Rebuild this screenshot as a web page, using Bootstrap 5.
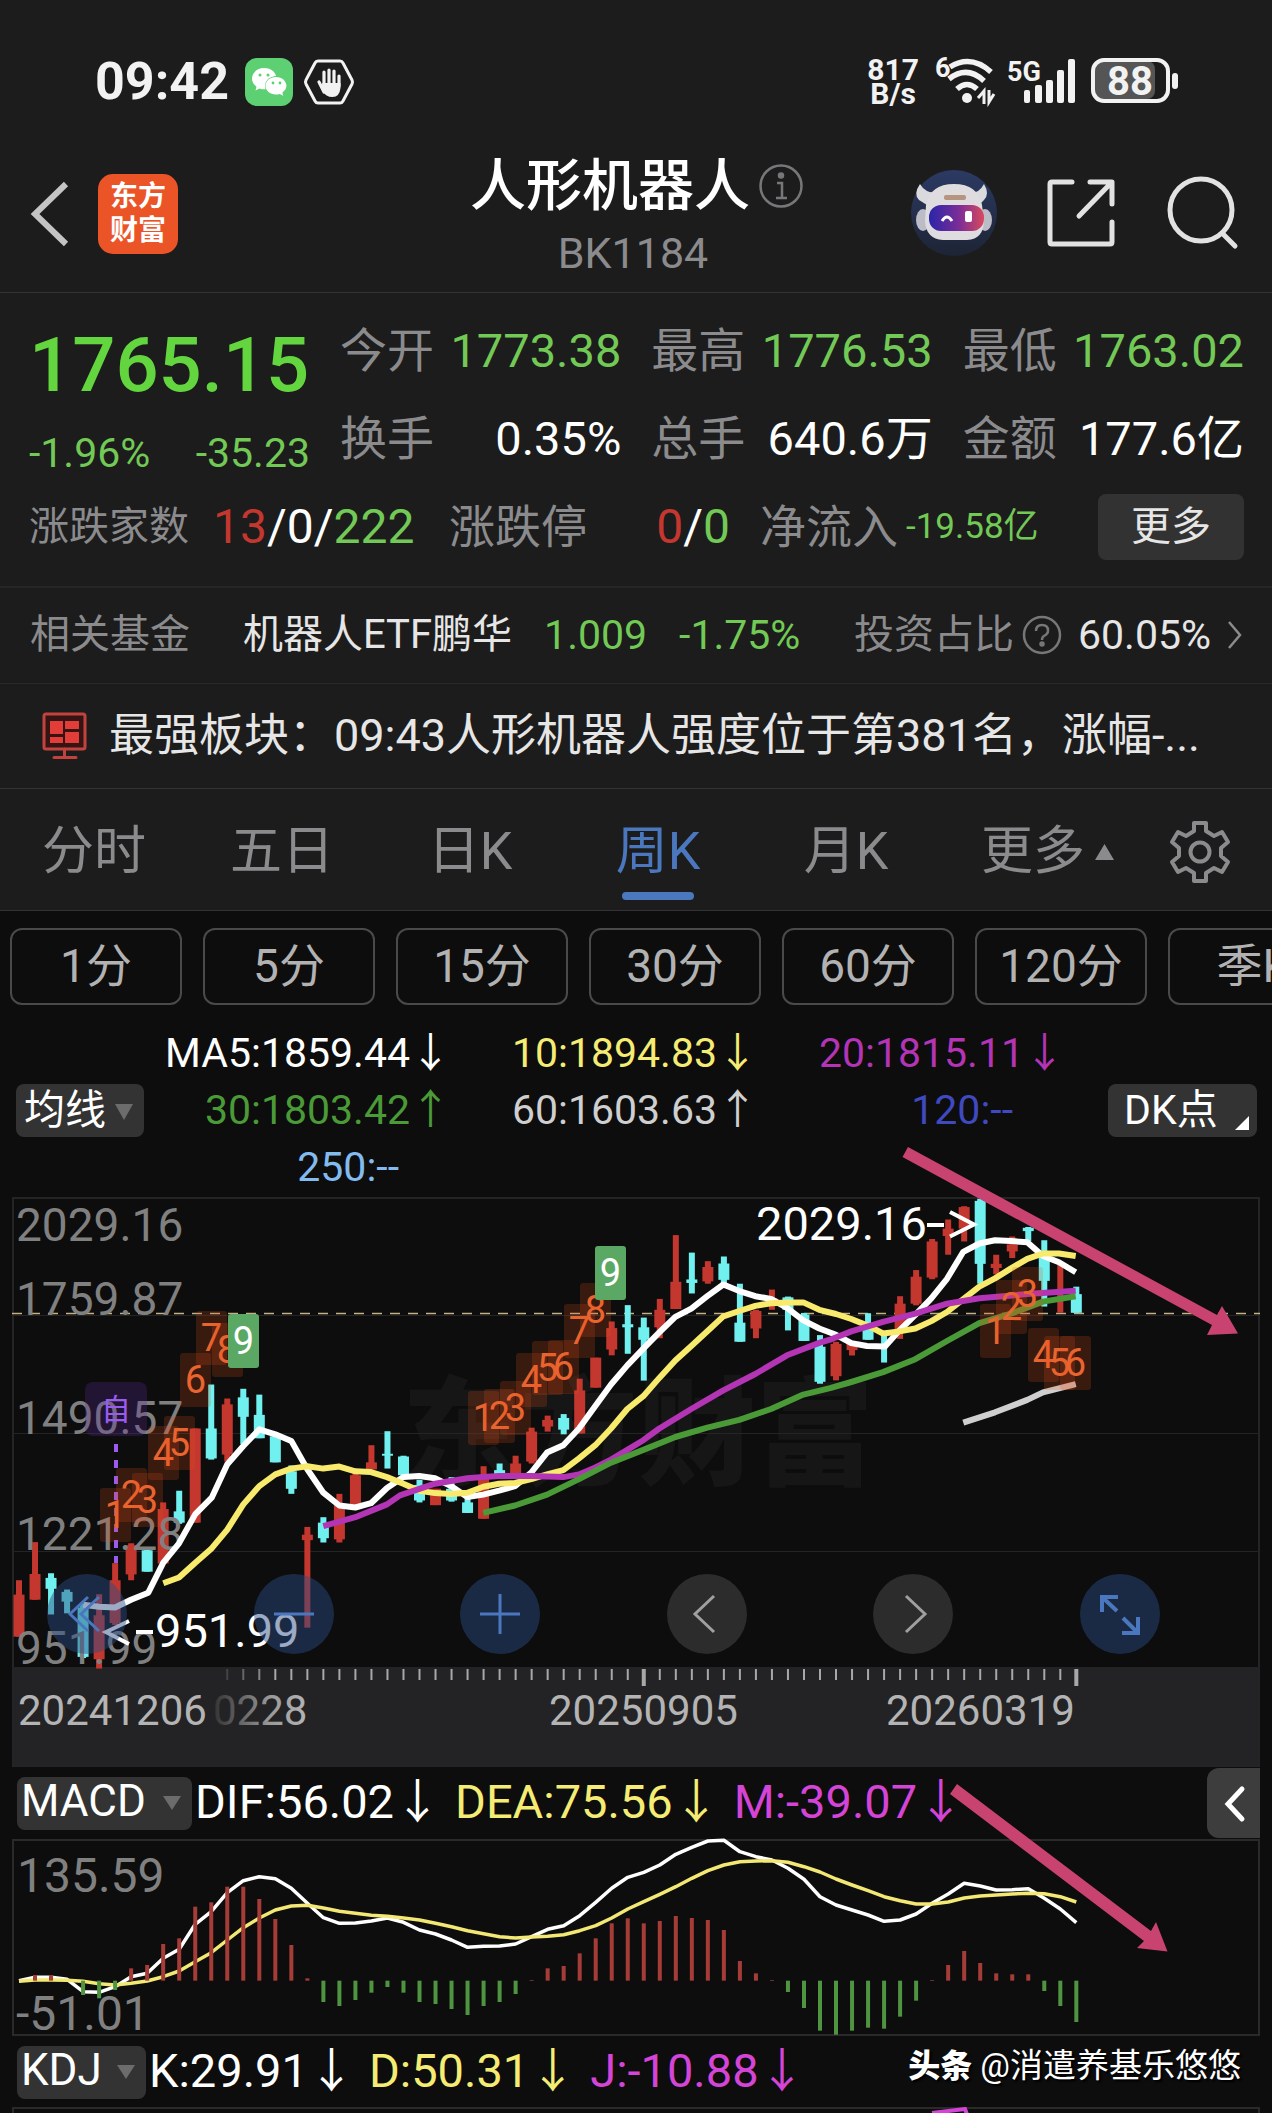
<!DOCTYPE html>
<html lang="zh-CN" data-bs-theme="dark">
<head>
<meta charset="utf-8">
<meta name="viewport" content="width=device-width, initial-scale=1">
<title>人形机器人 BK1184</title>
<link href="https://cdn.jsdelivr.net/npm/bootstrap@5.3.0/dist/css/bootstrap.min.css" rel="stylesheet">
<style>
:root{--up:#c3372f;--down:#72c955;--panel:#1c1c1c;--muted:#8b8b8d;--rule:#333335}
body{background:#0d0d0d;color:#fff;font-family:Roboto,"Noto Sans CJK SC",sans-serif;line-height:1;overflow-x:hidden}
a{text-decoration:none;color:inherit}
svg{display:block;flex-shrink:0}
.panel{background:var(--panel)}
.rule-b{border-bottom:1px solid var(--rule)}
.rule-soft{border-bottom:2px solid #262527}
.dim{color:var(--muted)}
.dn{color:var(--down)}
.up{color:var(--up)}
.plain-btn{background:none;border:0;padding:0;color:inherit}
.statusbar{padding:57px 93px 0 95px;height:106px;color:#f2f2f2}
.clock{font-size:52px;font-weight:700;line-height:50px}
.speed{font-size:30px;font-weight:700;line-height:24px}
.topbar{height:187px;padding:0 32px 0 30px}
.topbar-left{height:216px}
.topbar-right{height:214px;gap:48px}
.topbar-title{padding:49px 6px 0 0}
.logo{width:80px;height:80px;border-radius:15px;background:#ea5427;font-size:28px;font-weight:700;line-height:34px;margin-left:28px}
.heading{font-size:56px;font-weight:500;line-height:62px}
.code{font-size:43px;line-height:44px;margin-top:14px}
.quote{padding:28px 28px 0 29px;height:295px}
.quote-grid{display:grid;grid-template-columns:281px 1fr 1fr 1fr;column-gap:30px}
.price{font-size:76px;font-weight:500;line-height:88px;color:#63d63f}
.change{font-size:41px;line-height:72px}
.t48{font-size:48px;line-height:60px}
.t46{font-size:46px;line-height:60px}
.t40{font-size:40px;line-height:52px}
.t41{font-size:41px;line-height:52px}
.t34{font-size:35px;line-height:52px}
.cell{height:88px;font-size:47px;line-height:60px}
.quote-row{margin-top:-3px}
.more{background:#323232;border:0;border-radius:8px;color:#e6e6e6;font-size:40px;line-height:64px;width:146px}
.fund{height:96px;padding:0 29px 2px 30px;color:#e6e6e6}
.news{height:105px;padding:0 40px 0 42px;font-size:45px;line-height:60px;color:#e6e6e6}
.tabs{height:122px;padding-top:4px;font-size:52px;line-height:64px;color:var(--muted)}
.tabs>*{flex:188 1 0}
.tabs>.gear{flex:144 1 0}
.tabs .caret{margin:0 14px 0 10px}
.tabs .on{color:#4a77bd;position:relative}
.tabs .on::after{content:"";position:absolute;left:58px;right:58px;bottom:-16px;height:8px;border-radius:4px;background:#4a77bd}
.pills{padding:17px 0 20px 10px;gap:21px;overflow:hidden}
.pill{flex:0 0 172px;height:77px;border:2px solid #4a4a4a;border-radius:12px;background:none;color:#b2b2b2;font-size:46px;line-height:60px;padding:0 0 2px}
.chip{background:#333;border-radius:8px;position:relative;height:53px}
.chip select,.chip-btn{appearance:none;border:0;background:none;color:#fff;height:53px;width:100%;padding:0 0 2px 8px;outline:0}
.chip .ind-select{font-size:44px;line-height:48px;padding:0 0 8px 4px}
.chip svg{position:absolute;pointer-events:none}
.legend-grid{display:grid;grid-template-columns:1fr 1fr 1fr;flex:1;padding-right:43px;font-size:41px;line-height:57px;text-align:right;white-space:nowrap}
.noarrow{padding-right:52px}
.chart{position:relative}
.chart svg.plot{width:100%;height:auto;overflow:visible;position:relative}
.tools{position:absolute;left:47px;right:112px;bottom:114px;z-index:2}
.tool{width:80px;height:80px;border-radius:50%;border:0;padding:0;background:rgba(45,76,132,.47);color:#4a77bd}
.tool.g{background:#2c2c2c;color:#a0a0a0}
.ind{height:70px;padding-left:17px;white-space:nowrap;position:relative}
.vals{font-size:47px;line-height:60px;gap:14px;margin-left:3px;padding-bottom:2px}
.side{position:absolute;right:12px;top:0;width:53px;height:70px;border:0;padding:0;border-radius:12px 0 0 12px;background:#3d3d3d}
.credit{position:absolute;right:31px;top:0;line-height:58px;font-size:33px;text-shadow:2px 2px 2px #000}
.credit b{font-weight:900;font-size:32px}
.plot text{font-family:Roboto,"Noto Sans CJK SC",sans-serif}
.y{color:#f5ec74}.p{color:#d444d6}
</style>
<script src="https://cdn.jsdelivr.net/npm/bootstrap@5.3.0/dist/js/bootstrap.bundle.min.js"></script>
</head>
<body>
<div class="panel">
  <div class="statusbar d-flex align-items-start justify-content-between">
    <div class="d-flex align-items-center">
      <span class="clock">09:42</span>
      <svg class="ms-3" width="48" height="50" viewBox="0 0 48 50"><rect y="1" width="48" height="48" rx="12" fill="#5dd074"/><path d="M19 11c-7 0-12 5-12 10.500 0 3.500 1.500 6 4.500 8l-1 4 4-2c5 1.500 6 .500 6 .500-2-8 4-12.500 10.500-13C30 14 25 11 19 11z" fill="#fff"/><path d="M31 20c-6 0-10.500 4-10.500 8.800S25 37.500 31 37.500c1.500 0 2.600-.2 3.800-.6l3.400 1.800-.8-3.200c2.400-1.600 4-4 4-6.700C41.400 24 37 20 31 20z" fill="#fff"/><g fill="#5dd074"><circle cx="15" cy="18" r="1.500"/><circle cx="23" cy="18" r="1.500"/><circle cx="28" cy="26" r="1.400"/><circle cx="35" cy="26" r="1.400"/></g></svg>
      <svg class="ms-2" width="56" height="48" viewBox="0 0 56 48"><path d="M17 3h22q2 0 3 2l9 17q1 2 0 4l-9 17q-1 2-3 2H17q-2 0-3-2L5 26q-1-2 0-4l9-17q1-2 3-2z" fill="none" stroke="#f2f2f2" stroke-width="3"/><g stroke="#f2f2f2" stroke-width="3.200" stroke-linecap="round" fill="none"><path d="M23 14v14M28 12v14M33 13v14M38 18v10M18 24l5 10"/></g><path d="M21 25h18.500v5q-1 9-8 9-7 0-9.500-6z" fill="#f2f2f2"/></svg>
    </div>
    <div class="d-flex align-items-center">
      <div class="speed text-center me-3">817<br>B/s</div>
      <svg width="64" height="50" viewBox="0 0 64 50"><text x="0" y="20" font-size="27" font-weight="700" fill="#f2f2f2">6</text><g fill="none" stroke="#f2f2f2" stroke-width="5.500"><path d="M15 10Q36-3 56 15"/><path d="M14 22Q32 8 49 24"/><path d="M22 32Q32 23 42 32"/></g><circle cx="32" cy="41" r="5" fill="#f2f2f2"/><path d="M43 41l6-7v13M54 33v12l5-8" fill="none" stroke="#f2f2f2" stroke-width="3"/></svg>
      <svg class="ms-2" width="68" height="50" viewBox="0 0 68 50"><text x="0" y="24" font-size="27" font-weight="700" fill="#f2f2f2">5G</text><g fill="#f2f2f2"><rect x="17" y="33" width="6" height="13" rx="2"/><rect x="28" y="28" width="7" height="18" rx="2"/><rect x="39" y="23" width="7" height="23" rx="2"/><rect x="50" y="13" width="7" height="33" rx="2"/><rect x="61" y="2" width="7" height="44" rx="2"/></g></svg>
      <svg class="ms-3" width="88" height="50" viewBox="0 0 88 50"><rect x="4" y="4" width="60" height="38" rx="8" fill="#555"/><rect x="2" y="3" width="75" height="41" rx="11" fill="none" stroke="#f2f2f2" stroke-width="4"/><rect x="81" y="16" width="6" height="16" rx="3" fill="#f2f2f2"/><text x="39" y="38" text-anchor="middle" font-size="40" font-weight="700" fill="#f2f2f2">88</text></svg>
    </div>
  </div>

  <header class="topbar rule-b d-flex align-items-start position-relative">
    <div class="topbar-left d-flex align-items-center position-relative">
      <button class="plain-btn" aria-label="返回"><svg width="40" height="68" viewBox="0 0 40 68"><path d="M36 4L5 34l31 30" fill="none" stroke="#c4c4c4" stroke-width="6"/></svg></button>
      <div class="logo d-flex flex-column justify-content-center text-center">东方<br>财富</div>
    </div>
    <div class="topbar-title position-absolute top-0 start-0 end-0 text-center">
      <div class="d-flex justify-content-center align-items-center ps-2"><h1 class="heading m-0">人形机器人</h1>
      <svg class="ms-2" width="46" height="46" viewBox="0 0 46 46" fill="none" stroke="#77777a" stroke-width="2.500"><circle cx="23" cy="23" r="20.500"/><path d="M19 20h5v15M18 35h11"/><circle cx="23" cy="12.500" r="2" fill="#77777a"/></svg></div>
      <div class="code dim">BK1184</div>
    </div>
    <div class="topbar-right d-flex align-items-center ms-auto position-relative">
      <svg width="88" height="88" viewBox="0 0 88 88"><defs><linearGradient id="visor"><stop offset="0" stop-color="#2a25a8"/><stop offset=".55" stop-color="#7c2d97"/><stop offset="1" stop-color="#d84a5e"/></linearGradient><linearGradient id="disc" x2="0" y2="1"><stop offset="0" stop-color="#2c3a63"/><stop offset="1" stop-color="#1d2435"/></linearGradient></defs><circle cx="44" cy="44" r="43" fill="url(#disc)"/><path d="M10 15q-7 10-1 16l8 5 8-13q-4 1-8-1-5-3-7-7zM74 15q6 10 0 16l-5 5-9-13q5 1 8-1 4-3 6-7z" fill="#d9d9de"/><ellipse cx="13" cy="51" rx="7" ry="11" fill="#bcbcc6"/><ellipse cx="75" cy="51" rx="7" ry="11" fill="#bcbcc6"/><path d="M16 36Q20 15 44 15t28 21l2 15q0 19-17 20H33Q16 70 15 52z" fill="#dfdce0"/><rect x="34" y="26" width="22" height="5" rx="2" fill="#b69580"/><rect x="19" y="36" width="55" height="26" rx="12" fill="url(#visor)"/><path d="M32 52q5-8 10 0" stroke="#fff" stroke-width="3" fill="none"/><rect x="55" y="42" width="7" height="11" rx="2" fill="#fff"/></svg>
      <svg width="70" height="70" viewBox="0 0 70 70" fill="none" stroke="#e2e2e2" stroke-width="5" stroke-linecap="round" stroke-linejoin="round"><path d="M26 4H6q-2 0-2 2v58q0 2 2 2h58q2 0 2-2V44M44 4h22v22M65 5L33 38"/></svg>
      <svg width="76" height="74" viewBox="0 0 76 74" fill="none" stroke="#e2e2e2" stroke-width="5" stroke-linecap="round"><circle cx="37" cy="34" r="31"/><path d="M58 57l13 13"/></svg>
    </div>
  </header>

  <section class="quote rule-soft">
    <div class="quote-grid">
      <div style="grid-row:span 2">
        <div class="price">1765.15</div>
        <div class="dn change d-flex justify-content-between pt-2"><span>-1.96%</span><span>-35.23</span></div>
      </div>
      <div class="cell d-flex justify-content-between"><span class="dim">今开</span><span class="dn">1773.38</span></div>
      <div class="cell d-flex justify-content-between"><span class="dim">最高</span><span class="dn">1776.53</span></div>
      <div class="cell d-flex justify-content-between"><span class="dim">最低</span><span class="dn">1763.02</span></div>
      <div class="cell d-flex justify-content-between"><span class="dim">换手</span><span>0.35%</span></div>
      <div class="cell d-flex justify-content-between"><span class="dim">总手</span><span>640.6万</span></div>
      <div class="cell d-flex justify-content-between"><span class="dim">金额</span><span>177.6亿</span></div>
    </div>
    <div class="quote-row d-flex align-items-center text-nowrap">
      <span class="dim t40" style="width:184px">涨跌家数</span>
      <span class="t48" style="width:236px"><span class="up">13</span>/0/<span class="dn">222</span></span>
      <span class="d-flex justify-content-between" style="width:281px"><span class="dim t46">涨跌停</span><span class="t48"><span class="up">0</span>/<span class="dn">0</span></span></span>
      <span class="dim t46" style="margin-left:30px">净流入</span>
      <span class="dn t34 ms-2">-19.58亿</span>
      <button class="more ms-auto">更多</button>
    </div>
  </section>

  <a href="#" class="fund rule-b d-flex align-items-center t40 text-nowrap" style="border-color:#2a2a2a">
    <span class="dim" style="width:213px">相关基金</span>
    <span>机器人ETF鹏华</span>
    <span class="dn t41" style="margin-left:32px">1.009</span>
    <span class="dn t41" style="margin-left:32px">-1.75%</span>
    <span class="dim ms-auto">投资占比</span>
    <svg class="ms-2" width="40" height="40" viewBox="0 0 40 40" fill="none" stroke="#77777a" stroke-width="2.500"><circle cx="20" cy="20" r="18"/><path d="M14 16q0-6 6-6t6 5.500q0 3.500-4 5.500-2 1-2 4"/><circle cx="20" cy="29" r="1.500" fill="#77777a"/></svg>
    <span class="t41 ms-3">60.05%</span>
    <svg class="ms-3" width="16" height="32" viewBox="0 0 16 32"><path d="M2 3l11 13L2 29" fill="none" stroke="#8b8b8d" stroke-width="2.500"/></svg>
  </a>

  <div class="news rule-b d-flex align-items-center">
    <svg width="46" height="50" viewBox="0 0 46 50"><g fill="none" stroke="#c2423e" stroke-width="3"><rect x="2" y="3" width="41" height="35" rx="2" fill="#351514"/><path d="M22.500 38v8M12 46.500h22" stroke-linecap="round"/></g><path d="M8 10h13v13H8zM23 10h14v8H23zM8 26h13v6H8zM23 21h14v11H23z" fill="#e23d38"/></svg>
    <div class="text-nowrap" style="margin-left:21px">最强板块：09:43人形机器人强度位于第381名，涨幅-...</div>
  </div>

  <nav class="tabs rule-b d-flex align-items-center text-center">
    <a href="#">分时</a><a href="#">五日</a><a href="#">日K</a><a href="#" class="on">周K</a><a href="#">月K</a>
    <a href="#" class="d-flex align-items-center justify-content-end text-nowrap">更多<svg class="caret" width="19" height="16"><path d="M9.500 0L19 16H0z" fill="#8b8b8d"/></svg></a>
    <a href="#" class="gear d-flex justify-content-center" aria-label="设置"><svg width="62" height="62" viewBox="0 0 62 62" fill="none" stroke="#8b8b8d" stroke-width="4" stroke-linejoin="round"><path d="M25 2h12v8l8 5 8-4 6 10-7 6v8l7 6-6 10-8-4-8 5v8H25v-8l-8-5-8 4-6-10 7-6v-8l-7-6 6-10 8 4 8-5z"/><circle cx="31" cy="31" r="9.500"/></svg></a>
  </nav>
</div>

<div class="pills d-flex">
  <button class="pill">1分</button><button class="pill">5分</button><button class="pill">15分</button><button class="pill">30分</button><button class="pill">60分</button><button class="pill">120分</button><button class="pill">季K</button>
</div>

<section class="d-flex align-items-center" style="padding:0 15px 0 16px">
  <div class="chip" style="width:128px"><select class="t41" aria-label="均线"><option>均线</option></select><svg style="right:11px;top:20px" width="18" height="16"><path d="M0 0h18L9 16z" fill="#6c6c6c"/></svg></div>
  <div class="legend-grid">
    <span>MA5:1859.44↓</span><span class="y">10:1894.83↓</span><span style="color:#b334b5">20:1815.11↓</span>
    <span style="color:#4b9a38">30:1803.42↑</span><span style="color:#cfcfcf">60:1603.63↑</span><span class="noarrow" style="color:#3f49c0">120:--</span>
    <span class="noarrow" style="color:#83bbef">250:--</span>
  </div>
  <div class="chip" style="width:149px"><button class="chip-btn t41 text-start ps-3">DK点</button><svg style="right:8px;bottom:7px" width="14" height="14"><path d="M14 0v14H0z" fill="#fff"/></svg></div>
</section>

<section class="chart">
  <svg class="plot" id="kline" viewBox="0 1196 1272 572">
    <defs><linearGradient id="fade"><stop offset="0" stop-color="#333"/><stop offset=".6" stop-color="#999"/><stop offset="1" stop-color="#b4b4b4"/></linearGradient></defs>
    <text x="402" y="1476" font-size="118" font-weight="900" fill="#161616">东方财富</text>
    <rect x="12" y="1667" width="1248" height="99" fill="#232325"/>
    <g stroke="#242426" stroke-width="2" fill="none"><rect x="13" y="1198" width="1246" height="568"/><path stroke-width="1" d="M13 1315.500H1259M13 1433.500H1259M13 1551.500H1259"/></g>
    <path d="M12 1313.500H1260" stroke="#c4b184" stroke-width="1.500" stroke-dasharray="10 8"/>
    <g id="candles"></g>
    <g font-size="46" fill="#808080"><text x="16" y="1241">2029.16</text><text x="16" y="1315">1759.87</text><text x="16" y="1434">1490.57</text><text x="16" y="1550">1221.28</text><text x="16" y="1664">951.99</text></g>
    <g id="lines" fill="none" stroke-width="6" stroke-linejoin="round"></g>
    <rect x="85" y="1382" width="62" height="54" rx="8" fill="#5a2a96" fill-opacity=".28"/><text x="116" y="1420" text-anchor="middle" font-size="30" fill="#9a5cf0">自</text>
    <path d="M116 1444V1563" stroke="#9a5cf0" stroke-width="4" stroke-dasharray="8 8"/>
    <g id="marks" font-size="38" text-anchor="middle"></g>
    <g font-size="47" fill="#fff"><text x="756" y="1240">2029.16</text><text x="155" y="1647">951.99</text></g>
    <path d="M927 1225h17M950 1212l24 12.500-24 12M136 1632h17M129 1621l-23 11 23 12" fill="none" stroke="#fff" stroke-width="4"/>
    <g font-size="42" fill="#b4b4b4"><text x="18" y="1725">20241206</text><text x="213" y="1725" fill="url(#fade)">0228</text><text x="549" y="1725">20250905</text><text x="886" y="1725">20260319</text></g>
    <g id="ticks" stroke="#a8a8a8" stroke-width="2"></g>
    <path d="M908 1147L1217 1315 1222 1306 1238 1333.500 1207 1335 1212 1325 902.500 1157z" fill="#c94371"/>
  </svg>
  <div class="tools d-flex justify-content-between">
    <button class="tool" aria-label="最左"><svg width="80" height="80" fill="none" stroke="currentColor" stroke-width="3"><path d="M41 23L23 40l18 17M52 23L34 40l18 17"/></svg></button>
    <button class="tool" aria-label="缩小"><svg width="80" height="80" stroke="currentColor" stroke-width="3"><path d="M20 40h40"/></svg></button>
    <button class="tool" aria-label="放大"><svg width="80" height="80" stroke="currentColor" stroke-width="3"><path d="M20 40h40M40 20v40"/></svg></button>
    <button class="tool g" aria-label="左移"><svg width="80" height="80" fill="none" stroke="currentColor" stroke-width="3"><path d="M47 22L28 40l19 18"/></svg></button>
    <button class="tool g" aria-label="右移"><svg width="80" height="80" fill="none" stroke="currentColor" stroke-width="3"><path d="M33 22l19 18-19 18"/></svg></button>
    <button class="tool" aria-label="全屏"><svg width="80" height="80" fill="none" stroke="currentColor" stroke-width="4"><path d="M38 23H22v15M22 23l15 14M42 59h16V43M58 59L43 44"/></svg></button>
  </div>
</section>

<div class="ind d-flex align-items-center">
  <div class="chip" style="width:175px"><select class="ind-select" aria-label="指标一"><option>MACD</option></select><svg style="right:11px;top:19px" width="18" height="14"><path d="M0 0h18L9 14z" fill="#6c6c6c"/></svg></div>
  <div class="vals d-flex"><span>DIF:56.02↓</span><span class="y">DEA:75.56↓</span><span class="p">M:-39.07↓</span></div>
  <button class="side" aria-label="展开"><svg width="53" height="70"><path d="M35 21L21 36l14 15" fill="none" stroke="#fff" stroke-width="5" stroke-linecap="round"/></svg></button>
</div>
<section class="chart">
  <svg class="plot" id="macd" viewBox="0 1838 1272 199">
    <rect x="13" y="1840" width="1246" height="195" fill="none" stroke="#2a2a2c" stroke-width="2"/>
    <g font-size="48" fill="#808080"><text x="17" y="1892">135.59</text><text x="16" y="2030">-51.01</text></g>
    <g id="macdlines" fill="none" stroke-width="3.500" stroke-linejoin="round"></g>
    <g id="bars" stroke-width="4"></g>
    <path d="M957 1784L1151 1931 1156 1922 1167.500 1951.500 1137 1948 1144 1941 950 1794z" fill="#c94371"/>
  </svg>
</section>
<div class="ind d-flex align-items-center">
  <div class="chip" style="width:129px"><select class="ind-select" aria-label="指标二"><option>KDJ</option></select><svg style="right:11px;top:19px" width="18" height="14"><path d="M0 0h18L9 14z" fill="#6c6c6c"/></svg></div>
  <div class="vals d-flex"><span>K:29.91↓</span><span class="y">D:50.31↓</span><span class="p">J:-10.88↓</span></div>
  <div class="credit"><b>头条</b> @消遣养基乐悠悠</div>
</div>
<section class="chart"><svg class="plot" viewBox="0 2107 1272 6" style="overflow:hidden"><path d="M13 2120V2108H1259V2120" fill="none" stroke="#2a2a2c" stroke-width="2"/><path d="M932 2113l33-4 3 8" fill="none" stroke="#d444d6" stroke-width="4"/></svg></section>

<script>
const X = i => 19 + 16.02 * i;
const el = (id, html) => document.getElementById(id).innerHTML += html;
// three panes of the series, each with its own origin and scale: [x0, kx, y0, ky]
const PANES = [[0, 3, 1160, 2.57], [400, 3, 1160, 2.57], [830, 3, 1120, 2.412]];
// candle: colour, high, body top, body bottom, low
const CANDLES = [
 [0, "r,1080,1117,1225,1225 r,982,1064,1130,1130 c,1062,1074,1102,1168 c,1104,1110,1135,1165 c,1140,1150,1277,1280 r,1116,1170,1283,1307 r,1036,1080,1190,1195 r,985,990,1065,1080 c,1000,1003,1058,1058 r,880,897,1037,1037 c,850,903,932,935 r,690,690,932,932 c,577,690,767,770 r,613,628,757,775 c,588,610,660,730 c,603,655,715,715 c,710,710,777,777 c,785,800,845,858 r,943,963,977,1202 c,918,932,972,983 r,858,885,975,983 r,805,810,890,890 r,733,777,795,795 c,697,755,760,793 c,760,762,810,810"],
 [1, "c,822,835,875,880 r,845,845,887,887 c,815,845,875,878 c,870,880,907,907 r,787,810,922,922 c,780,797,810,810 r,760,780,810,810 r,688,698,775,780 r,657,668,685,698 c,653,663,693,705 r,562,592,703,703 r,508,508,585,585 r,415,432,487,502 c,373,422,430,498 c,405,430,462,567 r,357,385,430,458 r,193,313,383,383 c,238,307,316,343 r,260,275,312,318 c,248,266,308,320 c,318,418,467,467 r,385,388,433,458 r,333,355,375,385 c,351,353,385,438 c,393,397,465,465 c,450,480,570,575"],
 [2, "r,535,540,618,628 r,538,540,555,568 c,466,498,530,530 c,515,542,542,585 r,425,443,510,528 r,362,378,443,447 r,287,293,380,384 r,240,262,280,325 r,208,210,262,293 c,190,195,347,395 r,325,347,357,372 r,281,300,317,333 c,258,260,268,292 c,290,330,388,450 r,345,345,345,465 c,402,420,465,465"]];
let k = 0, out = "";
CANDLES.forEach(([p, s]) => { const [, , y0, ky] = PANES[p];
  s.split(" ").forEach(r => { const [c, ...v] = r.split(","), [h, a, b, l] = v.map(n => y0 + n / ky), x = X(k++);
    out += `<g fill="${c == "r" ? "#c3372f" : "#70f0ef"}"><rect x="${x - 3}" y="${h}" width="6" height="${l - h}"/><rect x="${x - 5.5}" y="${a}" width="11" height="${b - a}"/></g>`; }); });
el("candles", out);
const LINES = {
 "#cfcfcf": [[2, "400,730 495,705 592,675 639,657 737,637"]],
 "#fff": [[0, "250,1143 297,1148 345,1150 393,1130 445,1112 490,1035 537,985 586,910 635,868 682,782 730,735 778,692 826,705 874,722 922,795 970,855 1018,888 1066,893 1113,882 1161,843 1210,815"], [1, "58,812 105,818 153,838 202,866 250,860 297,850 345,838 394,803 441,752 490,733 537,690 586,632 633,577 682,528 730,485 778,443 826,403 874,382 922,350 970,320 1018,337 1066,350 1113,357 1161,380 1210,412 1258,433"], [2, "18,518 64,538 111,545 165,546 208,508 256,470 304,430 351,383 400,318 448,298 495,290 543,292 592,295 639,328 687,343 737,367"]],
 "#f8ea6c": [[0, "490,1088 537,1073 586,1035 633,1000 682,950 730,885 778,838 826,808 874,793 922,787 970,793 1018,788 1066,800 1113,802 1161,815 1210,832"], [1, "58,850 105,856 153,858 202,855 250,840 297,832 345,830 394,820 441,808 490,797 537,767 586,733 633,690 682,640 730,607 778,560 826,515 874,478 922,440 970,402 1018,388 1066,375 1113,368 1161,366 1210,366 1258,385"], [2, "18,468 64,480 111,495 159,515 208,510 256,503 304,485 351,463 400,432 448,402 495,382 543,358 592,335 639,322 687,322 737,328"]],
 "#b334b5": [[0, "970,941 1066,918 1161,885"], [1, "0,862 58,845 105,832 153,825 202,818 250,815 297,812 394,812 490,815 537,808 586,790 633,770 682,745 730,720 778,690 874,640 970,592 1066,550 1161,502 1258,470"], [2, "0,530 64,510 159,487 256,467 351,443 448,430 592,420 737,412"]],
 "#4b9a38": [[1, "250,907 345,888 441,860 537,820 633,778 730,745 826,712 922,688 1018,668 1113,640 1210,603"], [2, "0,647 64,632 159,608 256,577 351,533 448,490 543,467 639,438 737,425"]]};
for (const c in LINES) { const pts = LINES[c].flatMap(([p, s]) => { const [x0, kx, y0, ky] = PANES[p];
    return s.split(" ").map(q => { const [x, y] = q.split(","); return (x0 + x / kx).toFixed(1) + "," + (y0 + y / ky).toFixed(1); }); });
  el("lines", `<polyline points="${pts.join(" ")}" stroke="${c}"/>`); }
// nine-turn counters: x, y, count
[[100,1488,1],[116,1468,2],[132,1473,3],[148,1426,4],[164,1416,5],[180,1353,6],[196,1311,7],[212,1323,8],[228,1314,9],[468,1391,1],[484,1389,2],[500,1381,3],[516,1353,4],[532,1341,5],[548,1340,6],[564,1304,7],[580,1283,8],[595,1246,9],[980,1304,1],[996,1280,2],[1012,1267,3],[1028,1328,4],[1044,1336,5],[1060,1336,6]]
 .forEach(([x, y, n]) => el("marks", n == 9
  ? `<rect x="${x}" y="${y}" width="31" height="54" rx="3" fill="#5aa863"/><text x="${x + 15.5}" y="${y + 40}" fill="#fff">9</text>`
  : `<rect x="${x}" y="${y}" width="31" height="54" rx="3" fill="#e8501a" fill-opacity=".2"/><text x="${x + 15.5}" y="${y + 40}" fill="#ea6430">${n}</text>`));
for (let i = 13; i < 67; i++) { const big = i == 39 || i == 66;
  el("ticks", `<path d="M${X(i)} 1669V${big ? 1686 : 1680}" ${big ? 'stroke-width="4"' : ""} opacity="${Math.min(1, (i - 12) / 4)}"/>`); }
const BARS = "0 645 645 0 705 715 690 625 615 552 535 440 427 380 380 417 477 555 655 726 738 720 698 681 698 726 732 747 765 738 726 702 660 625 618 580 535 490 475 490 483 468 474 480 510 603 640 660 696 744 812 824 812 803 806 770 722 660 615 573 609 640 643 643 693 738 786".split(" ");
const MY = v => 1760 + v / 3;
BARS.forEach((v, i) => { if (+v) el("bars", `<path d="M${X(i)} ${MY(662)}V${MY(v)}" stroke="${v > 662 ? "#4f9440" : "#a63c38"}"/>`); });
const DIF = "662 652 652 658 695 697 680 650 640 595 568 493 455 398 362 350 356 385 430 473 490 489 483 474 487 510 522 540 562 559 558 552 530 508 497 467 427 385 352 337 315 283 262 243 241 275 290 300 325 358 410 435 450 465 484 480 462 430 402 370 378 390 389 386 415 447 488";
const DEA = "664 660 660 661 664 671 675 670 663 650 633 605 578 540 503 474 450 438 436 444 454 460 466 469 474 480 490 500 512 521 530 534 531 529 524 512 497 474 447 425 403 380 355 332 315 305 303 302 307 320 336 357 375 392 410 422 432 432 426 414 408 405 402 400 401 410 426";
[[DIF, "#fff"], [DEA, "#f3e873"]].forEach(([s, c]) => el("macdlines", `<polyline stroke="${c}" points="${s.split(" ").map((v, i) => X(i).toFixed(1) + "," + MY(v).toFixed(1)).join(" ")}"/>`));
</script>
</body>
</html>
